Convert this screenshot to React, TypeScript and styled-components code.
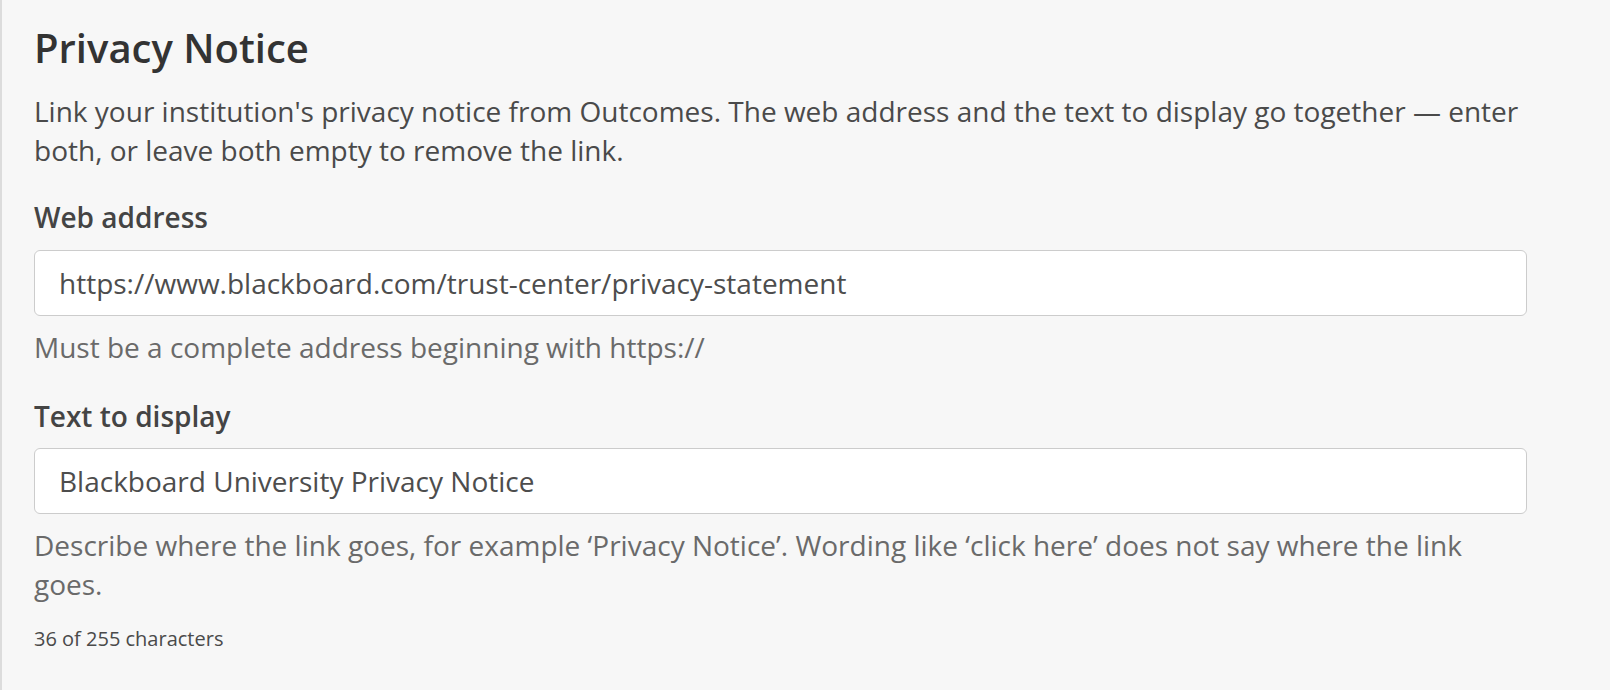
import React from "react";
import styled, { createGlobalStyle } from "styled-components";

const GlobalStyle = createGlobalStyle`
  html, body {
    margin: 0;
    padding: 0;
    background: #f7f7f7;
  }
  body {
    font-family: "Open Sans", "Noto Sans", sans-serif;
    -webkit-font-smoothing: antialiased;
  }
  * { box-sizing: border-box; }
`;

const Page = styled.main`
  min-height: 690px;
  background: #f7f7f7;
  border-left: 2px solid #dcdcdc;
  padding: 24px 83px 24px 32px;
`;

const Heading = styled.h1`
  margin: 0;
  font-size: 40px;
  line-height: 48px;
  font-weight: 600;
  color: #333333;
`;

const Intro = styled.p`
  margin: 20px 0 0;
  font-size: 28px;
  line-height: 39.2px;
  color: #4a4a4a;
`;

const Field = styled.div<{ $top: number }>`
  display: flex;
  flex-direction: column;
  margin-top: ${(p) => p.$top}px;
`;

const Label = styled.label`
  font-size: 28px;
  line-height: 39.2px;
  font-weight: 600;
  color: #444444;
`;

const Input = styled.input`
  margin-top: 12px;
  width: 100%;
  height: 66px;
  padding: 0 24px;
  border: 1.5px solid #cccccc;
  border-radius: 6px;
  background: #ffffff;
  font-family: "Open Sans", "Noto Sans", sans-serif;
  font-size: 28px;
  color: #4d4d4d;
  outline: none;
`;

const Help = styled.p`
  margin: 12px 0 0;
  font-size: 28px;
  line-height: 39.2px;
  color: #6a6a6a;
`;

const Counter = styled.p`
  margin: 20px 0 0;
  font-size: 20px;
  line-height: 30px;
  color: #4a4a4a;
`;

export default function App() {
  const text = "Blackboard University Privacy Notice";
  return (
    <>
      <GlobalStyle />
      <Page>
        <Heading>Privacy Notice</Heading>
        <Intro>
          Link your institution's privacy notice from Outcomes. The web address and the text to
          display go together — enter both, or leave both empty to remove the link.
        </Intro>
        <Field $top={28}>
          <Label htmlFor="url">Web address</Label>
          <Input
            id="url"
            defaultValue="https://www.blackboard.com/trust-center/privacy-statement"
          />
          <Help>Must be a complete address beginning with https://</Help>
        </Field>
        <Field $top={30}>
          <Label htmlFor="txt">Text to display</Label>
          <Input id="txt" defaultValue={text} />
          <Help>
            Describe where the link goes, for example ‘Privacy Notice’. Wording like ‘click here’
            does not say where the link goes.
          </Help>
          <Counter>{text.length} of 255 characters</Counter>
        </Field>
      </Page>
    </>
  );
}
